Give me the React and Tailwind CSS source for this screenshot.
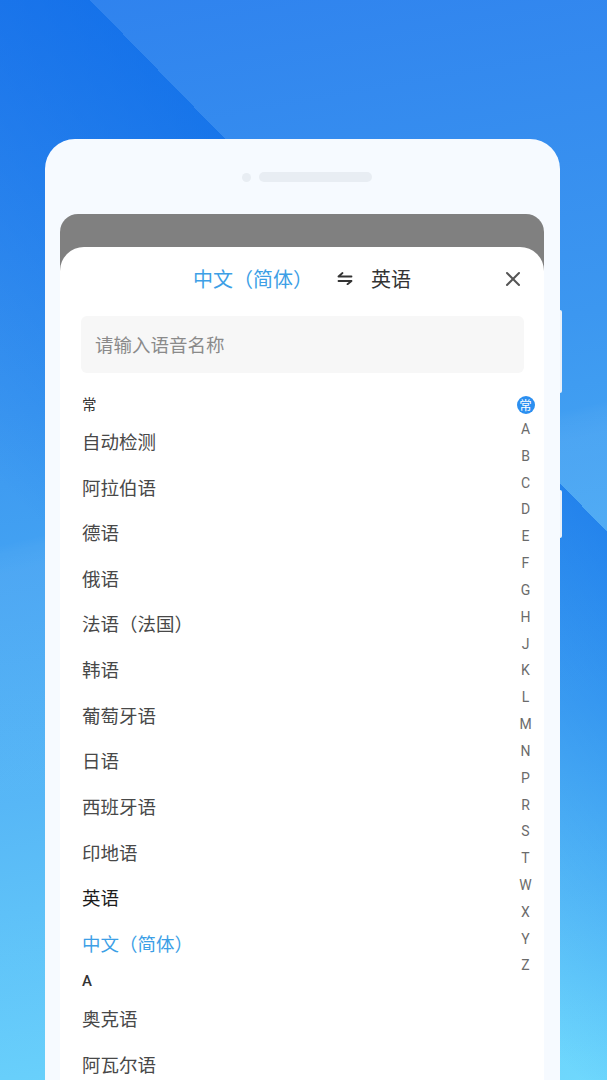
import React from "react";

const items = [
  { t: "常", type: "label" },
  { t: "自动检测" },
  { t: "阿拉伯语" },
  { t: "德语" },
  { t: "俄语" },
  { t: "法语（法国）" },
  { t: "韩语" },
  { t: "葡萄牙语" },
  { t: "日语" },
  { t: "西班牙语" },
  { t: "印地语" },
  { t: "英语", type: "dark" },
  { t: "中文（简体）", type: "blue" },
  { t: "A", type: "labelA" },
  { t: "奥克语" },
  { t: "阿瓦尔语" },
];

const letters = ["A","B","C","D","E","F","G","H","J","K","L","M","N","P","R","S","T","W","X","Y","Z"];

function SwapIcon() {
  return (
    <svg width="16" height="13" viewBox="0 0 16 13" fill="none" stroke="#333" strokeWidth="1.8" strokeLinecap="round" strokeLinejoin="round">
      <path d="M1.5 4.5 H14.5 M1.5 4.5 L5.5 1" />
      <path d="M1.5 9 H14.5 M14.5 9 L10.5 12.2" />
    </svg>
  );
}

function CloseIcon() {
  return (
    <svg width="16" height="16" viewBox="0 0 16 16" fill="none" stroke="#555" strokeWidth="2" strokeLinecap="round">
      <path d="M2 2 L14 14 M14 2 L2 14" />
    </svg>
  );
}

export default function App() {
  return (
    <div className="w-[607px] h-[1080px] overflow-hidden pt-[139px] font-['Noto_Sans_CJK_SC',sans-serif] bg-[linear-gradient(45.8deg,rgba(0,100,230,0)_35%,rgba(0,100,230,0.55)_68.8%,transparent_68.8%),linear-gradient(166.6deg,transparent_44.5%,rgba(255,255,255,0.03)_45.3%,rgba(255,255,255,0.06)_47%),linear-gradient(170deg,#2f82ee_0%,#3c97f0_35%,#4db3f6_68%,#66d6fd_100%)]">
      <div className="relative ml-[45px] w-[515px] h-[1000px] rounded-t-[30px] bg-[#f6faff] pl-[15px] pr-[16px] pt-[33px]">
        <div className="absolute right-[-2px] top-[171px] w-[2px] h-[83px] rounded-r-[2px] bg-[#e9f1fa]" />
        <div className="absolute right-[-2px] top-[351px] w-[2px] h-[48px] rounded-r-[2px] bg-[#e9f1fa]" />
        <div className="flex items-center gap-[8px] pl-[182px] h-[10px]">
          <div className="w-[9px] h-[9px] rounded-full bg-[#e8edf3]" />
          <div className="w-[113px] h-[10px] rounded-full bg-[#e8edf3]" />
        </div>
        <div className="mt-[32px] rounded-t-[18px] bg-[#808080] pt-[33px]">
          <div className="rounded-t-[24px] bg-white h-[900px]">
            <div className="relative flex h-[63px] items-center justify-center">
              <span className="text-[20px] text-[#3d9fe6] leading-none">中文（简体）</span>
              <span className="ml-[24px] mr-[18px] flex items-center"><SwapIcon /></span>
              <span className="text-[20px] text-[#333] leading-none">英语</span>
              <span className="absolute right-[23px] top-[24px]"><CloseIcon /></span>
            </div>
            <div className="ml-[21px] mt-[6px] w-[443px] h-[57px] rounded-[6px] bg-[#f7f7f7] flex items-center pl-[14px] text-[18.5px] text-[#8a8a8a]">
              请输入语音名称
            </div>
            <div className="mt-[16px] flex">
              <div className="flex-1 pl-[22px]">
                {items.map((it, i) => {
                  if (it.type === "label") {
                    return (
                      <div key={i} className="h-[30px] flex items-center text-[14.5px] text-[#333]">{it.t}</div>
                    );
                  }
                  if (it.type === "labelA") {
                    return (
                      <div key={i} className="h-[30px] flex items-center text-[15px] font-medium text-[#333] font-['Roboto','Noto_Sans_CJK_SC',sans-serif]">{it.t}</div>
                    );
                  }
                  const color = it.type === "blue" ? "text-[#3d9fe6]" : it.type === "dark" ? "text-[#1c1c1c]" : "text-[#484848]";
                  return (
                    <div key={i} className={`h-[45.64px] flex items-center text-[18.5px] ${color}`}>{it.t}</div>
                  );
                })}
              </div>
              <div className="w-[37px] pt-[7px] flex flex-col items-center">
                <div className="w-[18px] h-[18px] rounded-full bg-[#2b8ff0] text-white text-[12.5px] leading-none flex items-center justify-center">常</div>
                <div className="pt-[2px] flex flex-col items-center">
                  {letters.map((l) => (
                    <div key={l} className="h-[26.83px] flex items-center justify-center text-[14px] text-[#6b6b6b] font-['Roboto',sans-serif]">{l}</div>
                  ))}
                </div>
              </div>
            </div>
          </div>
        </div>
      </div>
    </div>
  );
}
